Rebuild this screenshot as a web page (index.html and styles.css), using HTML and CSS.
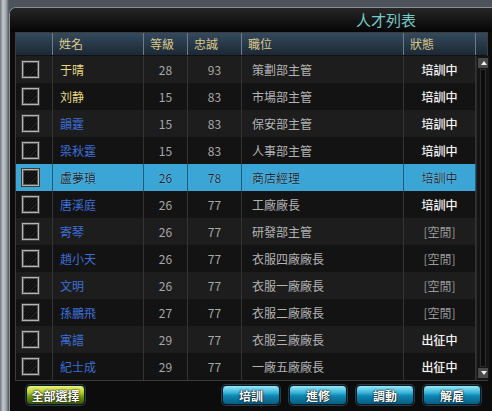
FILE: index.html
```html
<!DOCTYPE html>
<html>
<head>
  <title>人才列表</title>
  <link rel="stylesheet" href="styles.css">
</head>
<body>
  <div class="screen">
    <div class="dialog">
      <div class="title-bar">人才列表</div>
      <div class="panel">
        <div class="head">
          <div class="cell"></div>
          <div class="cell">姓名</div>
          <div class="cell">等級</div>
          <div class="cell">忠誠</div>
          <div class="cell">職位</div>
          <div class="cell">狀態</div>
          <div class="cell"></div>
        </div>
        <div class="list">
          <div class="rows">
            <div class="row light"><div class="cell"><span class="check"></span></div><div class="cell name gold">于晴</div><div class="cell num">28</div><div class="cell num">93</div><div class="cell job">策劃部主管</div><div class="cell state">培訓中</div></div>
            <div class="row"><div class="cell"><span class="check"></span></div><div class="cell name gold">刘静</div><div class="cell num">15</div><div class="cell num">83</div><div class="cell job">市場部主管</div><div class="cell state">培訓中</div></div>
            <div class="row light"><div class="cell"><span class="check"></span></div><div class="cell name">韻霆</div><div class="cell num">15</div><div class="cell num">83</div><div class="cell job">保安部主管</div><div class="cell state">培訓中</div></div>
            <div class="row"><div class="cell"><span class="check"></span></div><div class="cell name">梁秋霆</div><div class="cell num">15</div><div class="cell num">83</div><div class="cell job">人事部主管</div><div class="cell state">培訓中</div></div>
            <div class="row selected"><div class="cell"><span class="check"></span></div><div class="cell name">盧夢瑣</div><div class="cell num">26</div><div class="cell num">78</div><div class="cell job">商店經理</div><div class="cell state">培訓中</div></div>
            <div class="row"><div class="cell"><span class="check"></span></div><div class="cell name">唐溪庭</div><div class="cell num">26</div><div class="cell num">77</div><div class="cell job">工廠廠長</div><div class="cell state">培訓中</div></div>
            <div class="row light"><div class="cell"><span class="check"></span></div><div class="cell name">寄琴</div><div class="cell num">26</div><div class="cell num">77</div><div class="cell job">研發部主管</div><div class="cell state idle">[空閒]</div></div>
            <div class="row"><div class="cell"><span class="check"></span></div><div class="cell name">趙小天</div><div class="cell num">26</div><div class="cell num">77</div><div class="cell job">衣服四廠廠長</div><div class="cell state idle">[空閒]</div></div>
            <div class="row light"><div class="cell"><span class="check"></span></div><div class="cell name">文明</div><div class="cell num">26</div><div class="cell num">77</div><div class="cell job">衣服一廠廠長</div><div class="cell state idle">[空閒]</div></div>
            <div class="row"><div class="cell"><span class="check"></span></div><div class="cell name">孫鵬飛</div><div class="cell num">27</div><div class="cell num">77</div><div class="cell job">衣服二廠廠長</div><div class="cell state idle">[空閒]</div></div>
            <div class="row light"><div class="cell"><span class="check"></span></div><div class="cell name">寓譜</div><div class="cell num">29</div><div class="cell num">77</div><div class="cell job">衣服三廠廠長</div><div class="cell state">出征中</div></div>
            <div class="row"><div class="cell"><span class="check"></span></div><div class="cell name">紀士成</div><div class="cell num">29</div><div class="cell num">77</div><div class="cell job">一廠五廠廠長</div><div class="cell state">出征中</div></div>
          </div>
          <div class="scrollbar">
            <span class="arrow up"></span>
            <span class="track"></span>
            <span class="arrow down"></span>
          </div>
        </div>
      </div>
      <div class="actions">
        <button class="btn green">全部選擇</button>
        <div class="btn-group">
          <button class="btn">培訓</button>
          <button class="btn">進修</button>
          <button class="btn">調動</button>
          <button class="btn">解雇</button>
        </div>
      </div>
    </div>
  </div>
</body>
</html>
```

FILE: styles.css
```css
body {
  margin: 0;
  font-family: "Noto Sans CJK TC", "Noto Sans CJK SC", sans-serif;
  font-size: 12px;
}

.screen {
  width: 492px;
  height: 411px;
  overflow: hidden;
  background: linear-gradient(to right, #6c747c 0, #c4c9ce 3px, #a2a8b0 6px, #4c535a 9px, #4c535a 100%);
  padding-top: 7px;
  box-sizing: border-box;
}

.dialog {
  margin-left: 9px;
  height: 404px;
  background: #0c0c0c;
  border-left: 1px solid #8a9096;
  border-top: 1px solid #8a9096;
  border-top-left-radius: 7px;
  box-sizing: border-box;
  display: flex;
  flex-direction: column;
}

.title-bar {
  height: 24px;
  line-height: 24px;
  padding-left: 346px;
  font-size: 15px;
  color: #78c8c4;
  background: linear-gradient(#262626, #050505);
  border-top-left-radius: 6px;
}

.panel {
  margin-left: 5px;
  width: 473px;
  border: 1px solid #3c3c3c;
  box-sizing: border-box;
}

.head {
  display: grid;
  grid-template-columns: 37px 91px 44px 54px 162px 72px 1fr;
  height: 22px;
  background: linear-gradient(#344a5e, #1c2834);
  border-bottom: 1px solid #111;
}

.head .cell {
  border-right: 1px solid #6e7c88;
  line-height: 22px;
  padding-left: 6px;
  color: #dcc88a;
}

.head .cell:first-child {
  padding: 0;
}

.head .cell:last-child {
  border-right: none;
}

.list {
  display: grid;
  grid-template-columns: 1fr 13px;
}

.row {
  display: grid;
  grid-template-columns: 37px 91px 44px 54px 162px 72px;
  height: 27px;
  background: #131313;
}

.row.light {
  background: #1d1d1d;
}

.row.selected {
  background: #3ba6d6;
}

.row .cell {
  border-right: 1px solid #343434;
  display: flex;
  align-items: center;
}

.row.selected .cell {
  border-right-color: #1e5d7a;
}

.check {
  width: 15px;
  height: 15px;
  margin-left: 6px;
  border: 1px solid #b4b4b4;
  box-shadow: inset 0 0 0 1px #555, 0 0 0 1px #3a3a3a;
  background: repeating-linear-gradient(135deg, #101010 0, #101010 2px, #1f1f1f 2px, #1f1f1f 3px);
}

.name {
  padding-left: 7px;
  color: #3d6fd6;
}

.name.gold {
  color: #e6d680;
}

.num {
  justify-content: center;
  color: #a8a8a8;
}

.job {
  padding-left: 10px;
  color: #b4b4b4;
}

.state {
  justify-content: center;
  color: #ffffff;
  text-shadow: 0 0 1px #888;
}

.state.idle {
  color: #9a9a9a;
  text-shadow: none;
}

.row.selected .name,
.row.selected .num,
.row.selected .job,
.row.selected .state {
  color: #0c2436;
  text-shadow: 0 0 1px #bfe6f6;
}

.scrollbar {
  display: flex;
  flex-direction: column;
  background: #151515;
  border-left: 1px solid #2a2a2a;
  padding: 2px 1px;
}

.track {
  flex: 1;
  margin: 1px 2px;
  border: 1px solid #2c2c2c;
  background: #0c0c0c;
}

.arrow {
  height: 10px;
  background: #4a4a4a;
  position: relative;
}

.arrow::after {
  content: "";
  position: absolute;
  left: 3px;
  top: 3px;
  border-left: 3px solid transparent;
  border-right: 3px solid transparent;
}

.arrow.up::after {
  border-bottom: 4px solid #eee;
}

.arrow.down::after {
  border-top: 4px solid #eee;
}

.actions {
  display: flex;
  justify-content: space-between;
  align-items: center;
  padding: 4px 11px 0 16px;
}

.btn-group {
  display: flex;
  gap: 9px;
}

.btn {
  width: 58px;
  height: 20px;
  padding: 0;
  border: 1px solid #061a24;
  border-radius: 4px;
  font-family: inherit;
  font-size: 12px;
  font-weight: bold;
  color: #fff;
  text-shadow: 0 0 2px #000, 0 0 1px #000;
  background: linear-gradient(#9ae8f6 0, #3cb8dc 35%, #0c86b2 55%, #0a5c80 100%);
  box-shadow: 0 0 0 1px #2c3c44;
}

.btn.green {
  width: 59px;
  background: linear-gradient(#eef27a 0, #b6d230 35%, #6e9412 60%, #3c5606 100%);
}
```
